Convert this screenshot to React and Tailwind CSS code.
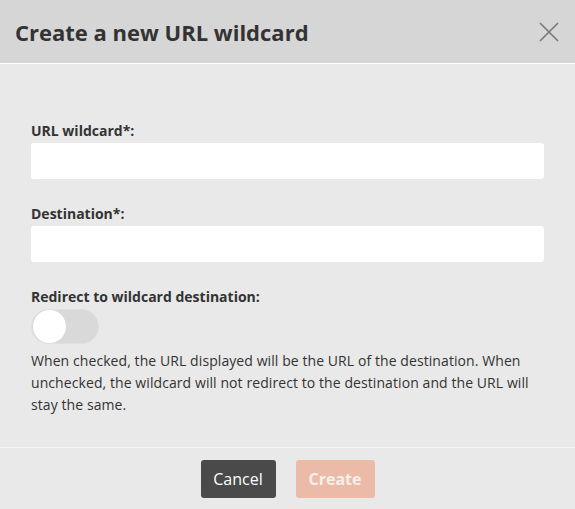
export default function App() {
  return (
    <div className="w-[575px] h-[509px] bg-[#e9e9e9] font-['Open_Sans',sans-serif] text-[#333]">
      {/* Header */}
      <div className="flex h-[64px] items-center justify-between bg-[#d6d6d6] border-b border-white pl-[15px] pr-[15px]">
        <h2 className="text-[22px] font-bold text-[#333] leading-none">Create a new URL wildcard</h2>
        <button className="text-[#777]">
          <svg width="22" height="22" viewBox="0 0 22 22" fill="none" stroke="currentColor" strokeWidth="1.6">
            <path d="M2 2L20 20M20 2L2 20" />
          </svg>
        </button>
      </div>

      {/* Body */}
      <div className="px-[31px] pt-[56px] pb-[31px]">
        <label className="block text-[14px] font-bold leading-[22px]">URL wildcard*:</label>
        <input className="mt-[1px] block h-[36px] w-full rounded-[3px] bg-white px-3 outline-none" />

        <label className="mt-[24px] block text-[14px] font-bold leading-[22px]">Destination*:</label>
        <input className="mt-[1px] block h-[36px] w-full rounded-[3px] bg-white px-3 outline-none" />

        <label className="mt-[24px] block text-[14px] font-bold leading-[22px]">Redirect to wildcard destination:</label>
        <div className="mt-[1px] flex h-[35px] w-[68px] items-center rounded-full bg-[#d9d9d9] border border-[#e0e0e0] pl-[1px]">
          <div className="h-[33px] w-[33px] rounded-full bg-white" />
        </div>

        <p className="mt-[6px] text-[14px] leading-[22px] tracking-[0.08px] text-[#333]">
          When checked, the URL displayed will be the URL of the destination. When unchecked, the wildcard will not redirect to the destination and the URL will stay the same.
        </p>
      </div>

      {/* Footer */}
      <div className="flex justify-center gap-[20px] border-t border-[#f5f5f5] pt-[12px]">
        <button className="h-[38px] w-[75px] rounded-[3px] bg-[#4a4a4a] text-[16px] text-white">Cancel</button>
        <button className="h-[38px] w-[79px] rounded-[3px] bg-[#ecbba8] text-[16px] font-bold text-[#f7efeb]">Create</button>
      </div>
    </div>
  );
}
